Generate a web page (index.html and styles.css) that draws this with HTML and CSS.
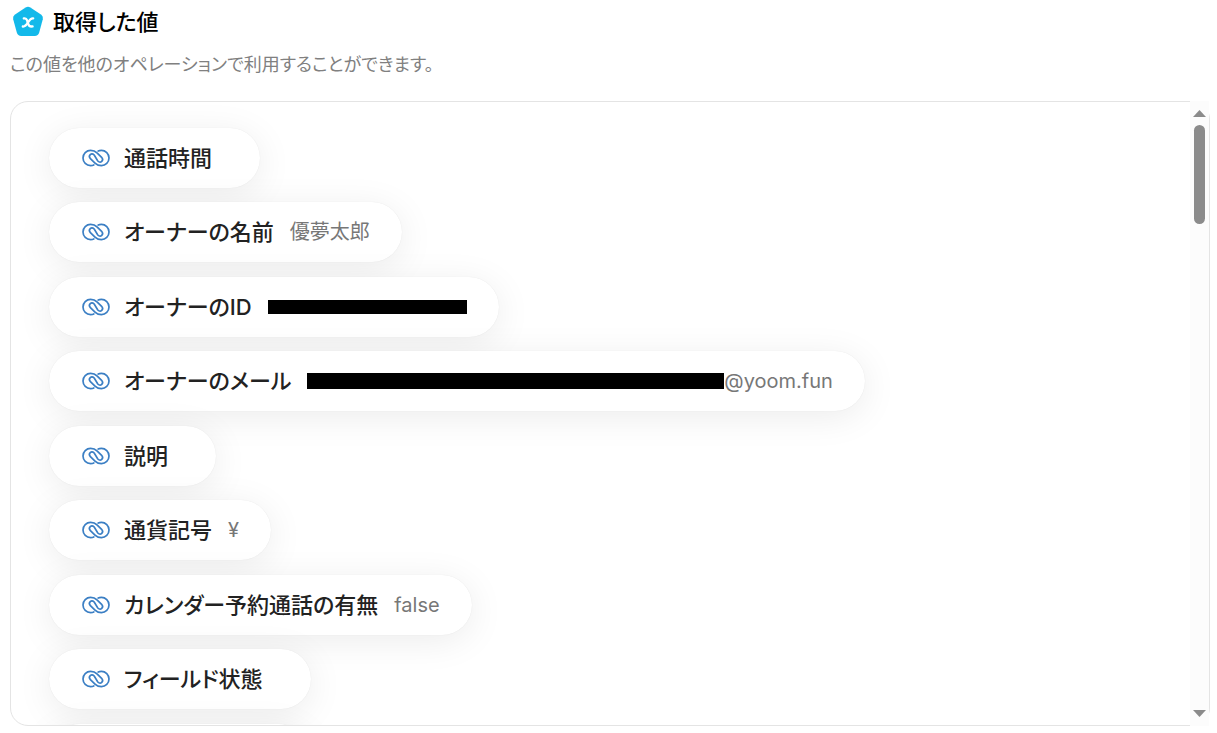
FILE: index.html
```html
<!DOCTYPE html>
<html lang="ja">
<head>
<meta charset="utf-8">
<title>取得した値</title>
<link rel="stylesheet" href="styles.css">
</head>
<body>
<svg class="defs" aria-hidden="true">
  <symbol id="link" viewBox="0 0 28 20">
    <path d="M11.8 17C10.8 17.5 9.7 17.6 8.6 17.6A7.6 7.6 0 0 1 8.6 2.4C11.5 2.4 13.3 3.2 15 4.9L19.6 9.3C22.3 12.4 18.6 15.8 15.8 13L12.2 7C9.4 4.2 5.7 7.6 8.4 10.7L13 15.1C14.7 16.8 16.5 17.6 19.4 17.6A7.6 7.6 0 0 0 19.4 2.4C18.3 2.4 17.2 2.5 16.2 3"/>
  </symbol>
</svg>
<header class="header">
  <h1 class="title">
    <svg class="badge" viewBox="0 0 32 32" aria-hidden="true">
      <path class="badge-shape" d="M13.6 1.5Q16 .2 18.4 1.5L29.3 8.8Q31.5 10.5 30.8 13.2L27.2 26.6Q26.2 30 22.8 30H9.2Q5.8 30 4.8 26.6L1.2 13.2Q.5 10.5 2.7 8.8Z"/>
      <path class="badge-x" d="M11.8 12.4C13.6 12 14.4 12.5 15 14.1L16.4 18.4C17 20.2 18 20.9 20.6 20.4"/>
      <path class="badge-x" d="M21.2 12.4C19 12 17.8 13.6 16.2 16.2C14.4 19.2 13.2 20.9 10.8 20.5"/>
    </svg>
    取得した値
  </h1>
  <p class="lead">この値を他のオペレーションで利用することができます。</p>
</header>
<main class="panel">
  <ul class="list">
    <li class="pill"><svg class="icon" aria-hidden="true"><use href="#link"/></svg><span class="name">通話時間</span><span class="value"></span></li>
    <li class="pill"><svg class="icon" aria-hidden="true"><use href="#link"/></svg><span class="name">オーナーの名前</span><span class="value">優夢太郎</span></li>
    <li class="pill"><svg class="icon" aria-hidden="true"><use href="#link"/></svg><span class="name">オーナーのID</span><span class="value"><span class="mask mask-id"></span></span></li>
    <li class="pill"><svg class="icon" aria-hidden="true"><use href="#link"/></svg><span class="name">オーナーのメール</span><span class="value"><span class="mask mask-mail"></span>@yoom.fun</span></li>
    <li class="pill"><svg class="icon" aria-hidden="true"><use href="#link"/></svg><span class="name">説明</span><span class="value"></span></li>
    <li class="pill"><svg class="icon" aria-hidden="true"><use href="#link"/></svg><span class="name">通貨記号</span><span class="value">¥</span></li>
    <li class="pill"><svg class="icon" aria-hidden="true"><use href="#link"/></svg><span class="name">カレンダー予約通話の有無</span><span class="value">false</span></li>
    <li class="pill"><svg class="icon" aria-hidden="true"><use href="#link"/></svg><span class="name">フィールド状態</span><span class="value"></span></li>
    <li class="pill pill-blank"></li>
  </ul>
  <div class="scrollbar" aria-hidden="true">
    <svg class="arrow" viewBox="0 0 13 7"><path d="M0 7L6.5 0L13 7Z"/></svg>
    <div class="track"><div class="thumb"></div></div>
    <svg class="arrow" viewBox="0 0 13 7"><path d="M0 0H13L6.5 7Z"/></svg>
  </div>
</main>
</body>
</html>
```
FILE: styles.css
```css
* { box-sizing: border-box; }

body {
  margin: 0;
  height: 100vh;
  padding: 6px 7px 7px 10px;
  display: flex;
  flex-direction: column;
  background: #fff;
  color: #222;
  font-family: Inter, "Noto Sans CJK JP", sans-serif;
  font-feature-settings: "palt";
}

.defs { position: absolute; width: 0; height: 0; }

.title {
  margin: 0;
  padding-left: 2px;
  display: flex;
  align-items: center;
  gap: 9px;
  color: #000;
  font-size: 22px;
  font-weight: 500;
  line-height: 32px;
}

.badge { width: 32px; height: 32px; }
.badge-shape { fill: #13b9ea; }
.badge-x { fill: none; stroke: #fff; stroke-width: 2.3; stroke-linecap: round; }

.lead {
  margin: 14px 0 24px;
  color: #808080;
  font-size: 18px;
  line-height: 25px;
}

.panel {
  flex: 1;
  min-height: 0;
  display: flex;
  border: 1px solid #e4e4e4;
  border-radius: 18px;
}

.list {
  flex: 1;
  margin: 0;
  padding: 26px 38px;
  display: grid;
  grid-auto-rows: 60px 61px;
  row-gap: 14px;
  align-content: start;
  justify-items: start;
  list-style: none;
  overflow-y: auto;
  scrollbar-width: none;
  border-radius: 17px 0 0 17px;
}

.pill {
  height: 60px;
  padding: 0 32px 0 33px;
  display: flex;
  align-items: center;
  border-radius: 30px;
  background: #fff;
  box-shadow: 0 6px 36px rgba(0, 0, 0, 0.08), 0 0 1px rgba(0, 0, 0, 0.1);
  white-space: nowrap;
}

.pill-blank { width: 260px; }

.icon {
  width: 28px;
  height: 20px;
  margin-right: 14px;
  fill: none;
  stroke: #3b7fc4;
  stroke-width: 1.7;
  stroke-linecap: round;
}

.name { font-size: 22px; font-weight: 500; line-height: 30px; }

.value {
  margin-left: 16px;
  display: flex;
  align-items: center;
  color: #777;
  font-family: Inter, "Noto Sans CJK JP", sans-serif;
  font-size: 20px;
  line-height: 28px;
}

.mask { background: #000; }
.mask-id { width: 199px; height: 14px; }
.mask-mail { width: 417px; height: 16px; }

.scrollbar {
  width: 19px;
  margin: -1px 0;
  padding: 9px 0;
  display: flex;
  flex-direction: column;
  align-items: center;
  gap: 8px;
  background: #fcfcfc;
}

.arrow { width: 13px; height: 7px; fill: #8b8b8b; }
.track { flex: 1; }
.thumb { width: 11px; height: 99px; border-radius: 6px; background: #8b8b8b; }
```
